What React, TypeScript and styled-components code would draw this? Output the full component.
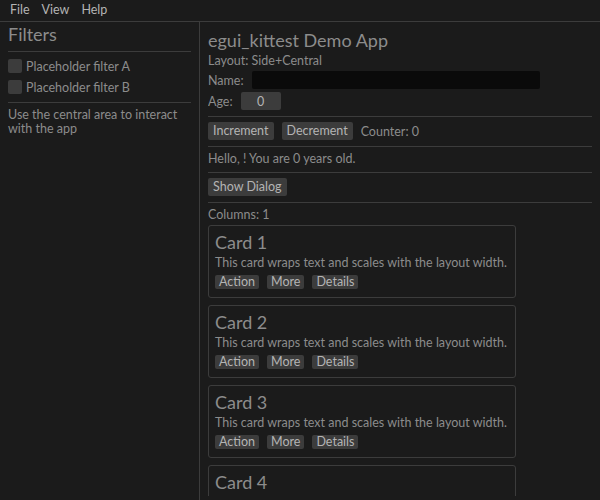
import React from "react";
import styled, { createGlobalStyle } from "styled-components";

const GlobalStyle = createGlobalStyle`
  html, body {
    margin: 0;
    padding: 0;
    background: #1b1b1b;
    overflow: hidden;
  }
  body {
    font-family: Lato, "Open Sans", sans-serif;
    font-size: 12.5px;
    color: #8c8c8c;
  }
  * { box-sizing: border-box; }
`;

const Shell = styled.div`
  display: flex;
  flex-direction: column;
  width: 600px;
  height: 500px;
  overflow: hidden;
`;

const MenuBar = styled.div`
  display: flex;
  align-items: center;
  gap: 8px;
  height: 22px;
  padding: 0 8px 1px;
  border-bottom: 1px solid #3c3c3c;
  flex-shrink: 0;
`;

const MenuItem = styled.span`
  padding: 0 2px;
  color: #b4b4b4;
  line-height: 18px;
`;

const Body = styled.div`
  display: flex;
  flex: 1;
  min-height: 0;
`;

const SidePanel = styled.div`
  width: 200px;
  flex-shrink: 0;
  border-right: 1px solid #3c3c3c;
  padding: 2px 8px;
  display: flex;
  flex-direction: column;
  gap: 3px;
`;

const Central = styled.div`
  flex: 1;
  padding: 8px 8px 4px;
  display: flex;
  flex-direction: column;
  min-width: 0;
  min-height: 0;
`;

const ScrollArea = styled.div`
  flex: 1;
  min-height: 0;
  overflow: hidden;
  display: flex;
  flex-direction: column;
  gap: 3px;
`;

const Heading = styled.div`
  font-size: 18px;
  line-height: 21px;
  white-space: nowrap;
  flex-shrink: 0;
`;

const Label = styled.div`
  line-height: 14px;
  flex-shrink: 0;
`;

const Separator = styled.div`
  height: 1px;
  margin: 3px 0 2px;
  background: #3c3c3c;
  flex-shrink: 0;
`;

const CheckRow = styled.label`
  display: flex;
  align-items: center;
  gap: 4px;
  height: 18px;
`;

const CheckBox = styled.span`
  width: 14px;
  height: 14px;
  border-radius: 2px;
  background: #3c3c3c;
  flex-shrink: 0;
`;

const Row = styled.div`
  display: flex;
  align-items: center;
  gap: 8px;
  height: 18px;
  flex-shrink: 0;
`;

const TextField = styled.div`
  width: 288px;
  height: 18px;
  border-radius: 2px;
  background: #0a0a0a;
`;

const DragValue = styled.div`
  width: 40px;
  height: 18px;
  border-radius: 2px;
  background: #3c3c3c;
  color: #b4b4b4;
  display: flex;
  align-items: center;
  justify-content: center;
`;

const Button = styled.button<{ $small?: boolean }>`
  font: inherit;
  border: none;
  margin: 0;
  height: ${(p) => (p.$small ? "14px" : "18px")};
  padding: 0 ${(p) => (p.$small ? "4px" : "5px")};
  border-radius: 2px;
  background: #3c3c3c;
  color: #b4b4b4;
  line-height: 14px;
  white-space: nowrap;
  cursor: pointer;
`;

const CardList = styled.div`
  display: flex;
  flex-direction: column;
  gap: 7px;
  flex-shrink: 0;
`;

const Card = styled.div`
  width: 308px;
  border: 1px solid #3c3c3c;
  border-radius: 3px;
  padding: 6px;
  display: flex;
  flex-direction: column;
  gap: 3px;
  flex-shrink: 0;
`;

const CardText = styled(Label)`
  white-space: nowrap;
`;

const cards = [1, 2, 3, 4];

export default function App() {
  return (
    <>
      <GlobalStyle />
      <Shell>
        <MenuBar>
          <MenuItem>File</MenuItem>
          <MenuItem>View</MenuItem>
          <MenuItem>Help</MenuItem>
        </MenuBar>
        <Body>
          <SidePanel>
            <Heading>Filters</Heading>
            <Separator />
            <CheckRow>
              <CheckBox />
              Placeholder filter A
            </CheckRow>
            <CheckRow>
              <CheckBox />
              Placeholder filter B
            </CheckRow>
            <Separator />
            <Label>Use the central area to interact with the app</Label>
          </SidePanel>
          <Central>
            <ScrollArea>
              <Heading>egui_kittest Demo App</Heading>
              <Label>Layout: Side+Central</Label>
              <Row>
                <span>Name:</span>
                <TextField />
              </Row>
              <Row>
                <span>Age:</span>
                <DragValue>0</DragValue>
              </Row>
              <Separator />
              <Row>
                <Button>Increment</Button>
                <Button>Decrement</Button>
                <span>Counter: 0</span>
              </Row>
              <Separator />
              <Label>Hello, ! You are 0 years old.</Label>
              <Separator />
              <Row>
                <Button>Show Dialog</Button>
              </Row>
              <Separator />
              <Label>Columns: 1</Label>
              <CardList>
                {cards.map((n) => (
                  <Card key={n}>
                    <Heading>Card {n}</Heading>
                    <CardText>This card wraps text and scales with the layout width.</CardText>
                    <Row>
                      <Button $small>Action</Button>
                      <Button $small>More</Button>
                      <Button $small>Details</Button>
                    </Row>
                  </Card>
                ))}
              </CardList>
            </ScrollArea>
          </Central>
        </Body>
      </Shell>
    </>
  );
}
